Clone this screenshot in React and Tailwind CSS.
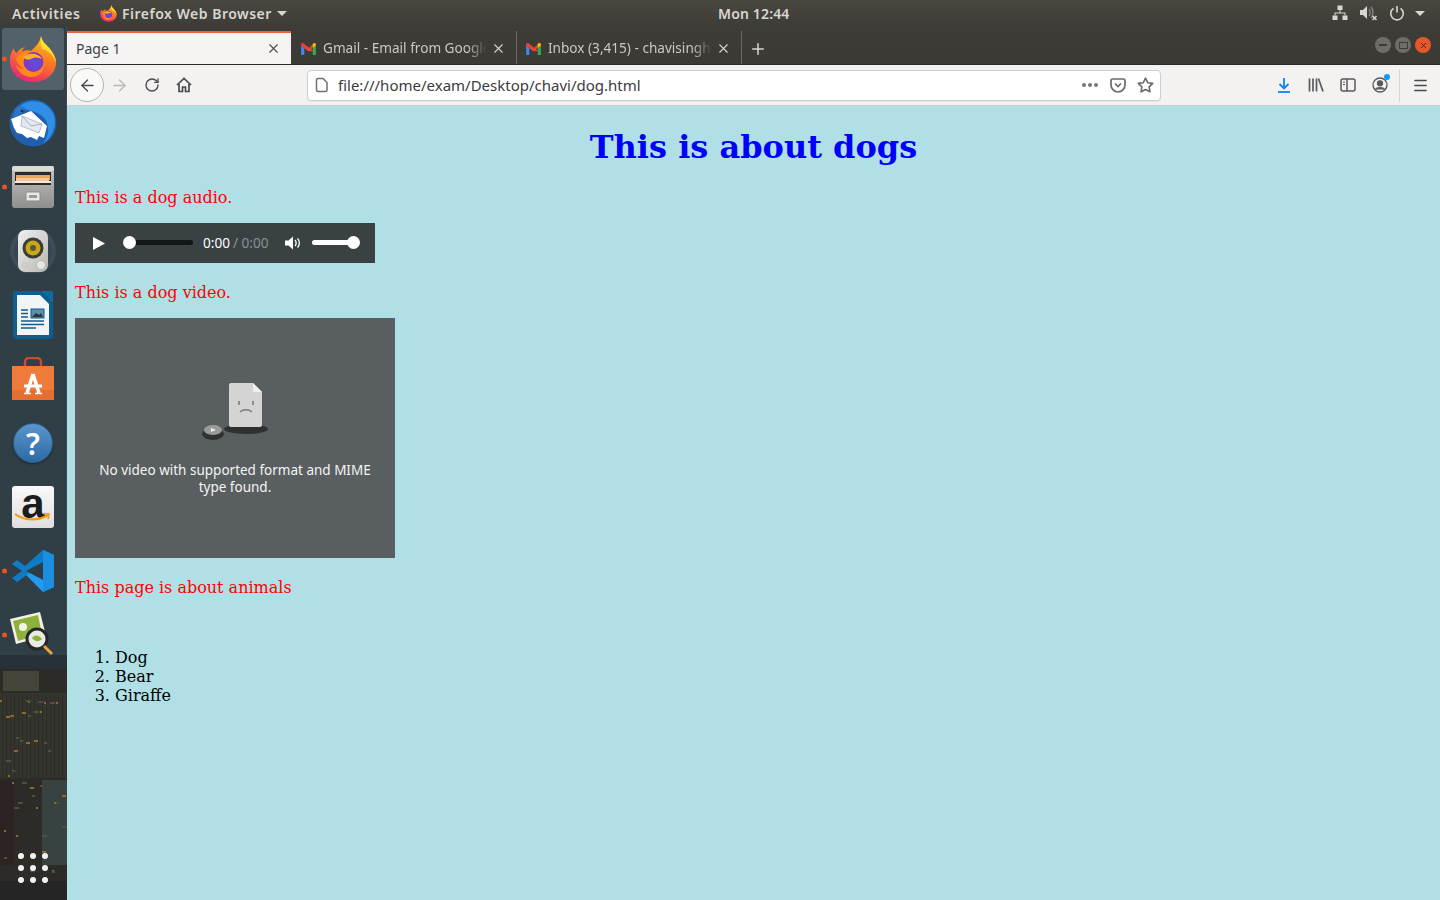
import React from "react";
import { X, Plus, ArrowLeft, ArrowRight, RotateCw, Menu } from "lucide-react";

const uiFont = "font-['Noto_Sans','Open_Sans',sans-serif]";

function FirefoxLogo({ size = 48 }) {
  return (
    <svg width={size} height={size} viewBox="0 0 48 48">
      <defs>
        <linearGradient id="ffBody" x1="0.7" y1="0" x2="0.3" y2="1">
          <stop offset="0" stopColor="#ffc61e" />
          <stop offset="0.45" stopColor="#ff7a1f" />
          <stop offset="1" stopColor="#e9207a" />
        </linearGradient>
        <radialGradient id="ffBall" cx="0.55" cy="0.55" r="0.6">
          <stop offset="0" stopColor="#5b53d8" />
          <stop offset="1" stopColor="#8c2fc4" />
        </radialGradient>
      </defs>
      <path d="M32 1c1 6 5 8 9 13 4 5 6 10 6 13 0 12-10 20-23 20C11 47 1 38 1 26c0-5 1-9 4-13 0 3 1 4 3 5 1-3 4-5 8-6-2 2-3 3-3 5 3-2 6-2 9-1 4-4 9-8 10-15z" fill="url(#ffBody)" />
      <path d="M32 1c1 6 5 8 9 13 3 4 6 9 6 13-3-7-7-11-13-13-2-1-3-6-2-13z" fill="#ffdf2e" />
      <path d="M7 24c3-5 8-8 13-7 7 0 14 4 15 11 1 8-5 14-13 14-7 0-13-5-15-12 3 3 5 4 8 4-4-2-7-6-8-10z" fill="#ff8a16" />
      <circle cx="24.5" cy="27" r="10" fill="url(#ffBall)" />
      <path d="M14 22c3-3 8-4 12-3 4 1 6 3 7 5-4-2-8-2-11 0-3 1-5 1-8-2z" fill="#ffb21e" />
    </svg>
  );
}

function GmailIcon() {
  return (
    <svg width="15" height="12" viewBox="0 0 16 13">
      <path d="M0 2.500V13h3.400V5.500z" fill="#4285f4" />
      <path d="M16 2.500V13h-3.400V5.500z" fill="#34a853" />
      <path d="M0 1.600C0 .3 1.500-.4 2.500.4L8 4.600l4.600 3.400v1L8 9 3.400 5.500v-.3L0 3z" fill="#ea4335" />
      <path d="M12.600 1.300v4.200L8 9 3.400 5.500V2.500L8 6z" fill="#ea4335" />
      <path d="M13.500.4c1-.8 2.500-.1 2.500 1.200v1L12.600 5.500V1.300z" fill="#fbbc04" />
    </svg>
  );
}

function Tab({ title, active, width }) {
  if (active) {
    return (
      <div className={`${width} h-full flex items-center pl-[9px] pr-[10px] bg-[#f5f4f2] border-t-2 border-[#e8653a]`}>
        <span className="flex-1 text-[14px] text-[#3f4048]">{title}</span>
        <X size={15} strokeWidth={1.8} className="text-[#4a4a4f]" />
      </div>
    );
  }
  return (
    <div className={`${width} h-[33px] pt-[2px] flex items-center pl-[9px] pr-[10px] border-r border-[#6b6a64]`}>
      <GmailIcon />
      <span className="ml-[7px] flex-1 overflow-hidden whitespace-nowrap text-[13.6px] text-[#c9c8c3] [mask-image:linear-gradient(to_right,black_88%,transparent)]">
        {title}
      </span>
      <X size={15} strokeWidth={1.8} className="ml-[4px] text-[#d4d3cf]" />
    </div>
  );
}

function TopBar() {
  return (
    <div className={`${uiFont} h-[26px] flex items-center justify-between bg-gradient-to-b from-[#4a4741] to-[#3e3c36] text-[14px] font-semibold text-[#d8d8d2]`}>
      <div className="flex items-center">
        <span className="ml-[12px] w-[88px] tracking-[0.6px]">Activities</span>
        <FirefoxLogo size={17} />
        <span className="ml-[5px] tracking-[0.5px]">Firefox Web Browser</span>
        <span className="ml-[5px] w-0 h-0 border-x-[5px] border-x-transparent border-t-[5px] border-t-[#d8d8d2]" />
      </div>
      <span className="absolute left-[718px] tracking-[0.15px]">Mon 12:44</span>
      <div className="flex items-center pr-[15px]">
        <svg width="16" height="16" viewBox="0 0 16 16" fill="#d8d8d2">
          <rect x="5.500" y="0.500" width="5" height="4.500" />
          <rect x="0.500" y="10.500" width="5" height="4.500" />
          <rect x="10.500" y="10.500" width="5" height="4.500" />
          <path d="M7.500 5h1v2.500H13.500v3h-1V8.500h-9v2h-1v-3h5z" />
        </svg>
        <svg className="ml-[12px]" width="18" height="16" viewBox="0 0 18 16">
          <path d="M0 5h3l4-4v13l-4-4H0z" fill="#d8d8d2" />
          <path d="M9 4c1.500 1 1.500 6 0 7M11 2c2.500 2 2.500 9 0 11" stroke="#8d8c87" strokeWidth="1.300" fill="none" />
          <path d="M12.500 11l4 4m0-4l-4 4" stroke="#d8d8d2" strokeWidth="1.500" />
        </svg>
        <svg className="ml-[11px]" width="16" height="16" viewBox="0 0 16 16" fill="none" stroke="#d8d8d2" strokeWidth="1.600">
          <path d="M4.500 3.300a6.300 6.300 0 1 0 7 0" />
          <path d="M8 1v6.500" />
        </svg>
        <span className="ml-[10px] w-0 h-0 border-x-[5px] border-x-transparent border-t-[5px] border-t-[#d8d8d2]" />
      </div>
    </div>
  );
}

function WindowButton({ kind }) {
  const bg = kind === "close" ? "bg-[#e4572a]" : "bg-[#6e6d68]";
  return (
    <div className={`w-[16px] h-[16px] rounded-full ${bg} flex items-center justify-center`}>
      {kind === "min" && <div className="w-[8px] h-[2px] bg-[#3e3d38]" />}
      {kind === "max" && <div className="w-[9px] h-[7px] border border-[#3e3d38]" />}
      {kind === "close" && <X size={9} strokeWidth={2.2} className="text-[#3e2015]" />}
    </div>
  );
}

function TabStrip() {
  return (
    <div className={`${uiFont} h-[39px] flex items-end bg-gradient-to-b from-[#3e3c36] to-[#3b3a35] border-b border-[#2a2924]`}>
      <div className="h-[33px] flex items-center w-full">
        <Tab title="Page 1" active width="w-[224px]" />
        <Tab title="Gmail - Email from Google" width="w-[225px] ml-[1px]" />
        <Tab title="Inbox (3,415) - chavisingh" width="w-[225px]" />
        <Plus size={18} strokeWidth={2} className="mt-[2px] ml-[7px] text-[#d8d8d2]" />
        <div className="ml-auto mr-[9px] -mt-[5px] flex gap-[4px]">
          <WindowButton kind="min" />
          <WindowButton kind="max" />
          <WindowButton kind="close" />
        </div>
      </div>
    </div>
  );
}

function NavBar() {
  return (
    <div className={`${uiFont} h-[41px] flex items-center bg-[#f3f2f0] border-b border-[#c9cfd1]`}>
      <div className="ml-[3px] w-[34px] h-[34px] rounded-full border border-[#b3b3b1] bg-[#f9f9f8] flex items-center justify-center">
        <ArrowLeft size={19} strokeWidth={1.7} className="text-[#4a4a4f]" />
      </div>
      <ArrowRight size={19} strokeWidth={1.7} className="ml-[6px] text-[#b9b9b9]" />
      <RotateCw size={16} strokeWidth={2} className="ml-[15px] text-[#4a4a4f]" />
      <svg className="ml-[16px]" width="16" height="16" viewBox="0 0 16 16" fill="none" stroke="#4a4a4f" strokeWidth="1.700">
        <path d="M1 8l7-6.500L15 8" />
        <path d="M3 7v7.500h3.500V10h3v4.500H13V7" />
      </svg>
      <div className="ml-[115px] w-[854px] h-[31px] bg-white border border-[#cfcecc] rounded-[4px] flex items-center shadow-[0_1px_1px_rgba(0,0,0,0.05)]">
        <svg className="ml-[7px]" width="14" height="16" viewBox="0 0 14 16" fill="none" stroke="#6f6f72" strokeWidth="1.500">
          <path d="M3 1.500h5l4 4V13a1.500 1.500 0 0 1-1.500 1.500h-7.500A1.500 1.500 0 0 1 1.500 13V3A1.500 1.500 0 0 1 3 1.500z" />
        </svg>
        <span className="ml-[9px] text-[15px] text-[#3b3b40]">file:///home/exam/Desktop/chavi/dog.html</span>
        <div className="ml-auto flex items-center pr-[6px]">
          <div className="flex gap-[2px]">
            <span className="w-[4px] h-[4px] rounded-full bg-[#77777a]" />
            <span className="w-[4px] h-[4px] rounded-full bg-[#77777a]" />
            <span className="w-[4px] h-[4px] rounded-full bg-[#77777a]" />
          </div>
          <svg className="ml-[12px]" width="16" height="15" viewBox="0 0 16 15" fill="none" stroke="#6a6a6d" strokeWidth="1.700">
            <path d="M1 2.500A1.500 1.500 0 0 1 2.500 1h11A1.500 1.500 0 0 1 15 2.500V7a7 7 0 0 1-14 0z" />
            <path d="M5 5.500l3 3 3-3" />
          </svg>
          <svg className="ml-[11px]" width="17" height="16" viewBox="0 0 17 16" fill="none" stroke="#6a6a6d" strokeWidth="1.600" strokeLinejoin="round">
            <path d="M8.500 1.200l2.200 4.500 5 .7-3.600 3.500.9 4.900-4.500-2.300L4 14.800l.9-4.900L1.300 6.400l5-.7z" />
          </svg>
        </div>
      </div>
      <svg className="ml-[116px]" width="14" height="16" viewBox="0 0 14 16" fill="none" stroke="#0a84ff" strokeWidth="1.800">
        <path d="M7 1v10M2.500 7l4.500 4.500L11.500 7" />
        <path d="M1 15h12" />
      </svg>
      <svg className="ml-[17px]" width="16" height="16" viewBox="0 0 16 16" stroke="#5a5a5e" strokeWidth="1.700" fill="none">
        <path d="M1.500 1.500v13M5 1.500v13M8.500 1.500v13M10.500 1.500l4.500 13" />
      </svg>
      <svg className="ml-[16px]" width="16" height="14" viewBox="0 0 16 14" stroke="#5a5a5e" strokeWidth="1.500" fill="none">
        <rect x="1" y="1" width="14" height="12" rx="2" />
        <path d="M7 1v12" />
        <path d="M3 4h2M3 6.500h2" strokeWidth="1" />
      </svg>
      <div className="relative ml-[16px]">
        <svg width="16" height="16" viewBox="0 0 16 16" fill="none" stroke="#5a5a5e" strokeWidth="1.300">
          <circle cx="8" cy="8" r="7" />
          <circle cx="8" cy="6.300" r="2.500" fill="#5a5a5e" />
          <path d="M3.500 12.500c1-2.500 8-2.500 9 0" fill="#5a5a5e" />
        </svg>
        <span className="absolute -top-[3px] -right-[2px] w-[6px] h-[6px] rounded-full bg-[#0a9dff]" />
      </div>
      <div className="ml-[11px] w-px h-[33px] bg-[#d6d5d3]" />
      <Menu size={17} strokeWidth={2} className="ml-[12px] text-[#4a4a4f]" />
    </div>
  );
}

function Thunderbird() {
  return (
    <svg width="48" height="48" viewBox="0 0 48 48">
      <circle cx="24" cy="24" r="23.500" fill="#1f5fae" />
      <path d="M10 8C18-1 37 0 44 14c5 11 0 24-10 31 6-9 7-19 1-26C28 11 18 12 10 8z" fill="#2f8fe6" />
      <path d="M2 20l20-8 16 15-3 12-5-2-2 4-6-3-4 1-5-4-5-1-3-5z" fill="#ffffff" />
      <path d="M13 17l20 8-3 9-18-7z" fill="#e4e8f0" stroke="#9aa6b8" strokeWidth="0.700" />
      <path d="M13 17l9 10 11-2" fill="none" stroke="#9aa6b8" strokeWidth="0.800" />
      <path d="M6 10c3-3 8-3 10-1l-5 7-7 2z" fill="#2f74c6" />
      <circle cx="13" cy="12" r="1.300" fill="#152c55" />
    </svg>
  );
}

function FileCabinet() {
  return (
    <svg width="44" height="44" viewBox="0 0 44 44">
      <defs>
        <linearGradient id="cabinet" x1="0" y1="0" x2="0" y2="1">
          <stop offset="0" stopColor="#c4c4c2" />
          <stop offset="1" stopColor="#8f8f8d" />
        </linearGradient>
      </defs>
      <rect x="1" y="1" width="42" height="42" rx="3" fill="url(#cabinet)" />
      <rect x="1" y="1" width="42" height="5" rx="2" fill="#dcdcda" />
      <rect x="4" y="7" width="36" height="13" fill="#2a2a2a" />
      <rect x="5" y="10" width="34" height="5" fill="#f6a24a" />
      <rect x="5" y="13" width="33" height="3" fill="#f2c79a" />
      <rect x="4" y="16" width="36" height="2" fill="#e9e9e7" />
      <rect x="15" y="27" width="14" height="9" rx="1" fill="#e8e8e6" stroke="#8b8b89" />
      <rect x="18" y="30" width="8" height="3" fill="#9a9a98" />
    </svg>
  );
}

function Speaker() {
  return (
    <svg width="48" height="44" viewBox="0 0 48 44">
      <defs>
        <linearGradient id="speakerBody" x1="0" y1="0" x2="1" y2="1">
          <stop offset="0" stopColor="#f0f0ec" />
          <stop offset="1" stopColor="#b6b6b2" />
        </linearGradient>
      </defs>
      <circle cx="24" cy="22" r="23" fill="#3c4e5c" />
      <circle cx="24" cy="22" r="19" fill="#36464f" />
      <rect x="9" y="1" width="30" height="42" rx="7" fill="url(#speakerBody)" />
      <circle cx="24" cy="19" r="10.500" fill="#3b3b38" />
      <circle cx="24" cy="19" r="7.500" fill="#c9a818" />
      <circle cx="24" cy="19" r="3" fill="#57553e" />
      <circle cx="32" cy="36" r="4.500" fill="#e6e6e2" stroke="#b7b7b2" />
      <circle cx="16" cy="36" r="2.500" fill="none" stroke="#c4c4c0" />
    </svg>
  );
}

function Writer() {
  return (
    <svg width="40" height="48" viewBox="0 0 40 48">
      <path d="M2 0h26l12 12v33a3 3 0 0 1-3 3H3a3 3 0 0 1-3-3V2a2 2 0 0 1 2-2z" fill="#0f5c8f" />
      <path d="M4 4h23l9 9v31H4z" fill="#f2f4f6" />
      <path d="M28 0l12 12V2a2 2 0 0 0-2-2z" fill="#0f6ca3" />
      <rect x="18" y="18" width="13" height="9" fill="#5a8fb0" stroke="#0f5c8f" />
      <path d="M19 26l4-4 3 2 2-2 2 4z" fill="#333" />
      <path d="M8 19h7M8 22.500h7M8 26h7M8 30h23M8 33.500h23M8 37h15" stroke="#0f5c8f" strokeWidth="1.700" />
    </svg>
  );
}

function ShopBag() {
  return (
    <svg width="42" height="44" viewBox="0 0 42 44">
      <path d="M13 10V5a4 4 0 0 1 4-4h8a4 4 0 0 1 4 4v5" fill="none" stroke="#c2502a" strokeWidth="2.400" />
      <path d="M0 9h42v34H0z" fill="#ee7b3a" />
      <path d="M0 33h42v10H0z" fill="#e56e30" />
      <path d="M21 17l-6 19" stroke="#fff" strokeWidth="3.500" />
      <path d="M21 17l6 19" stroke="#fff" strokeWidth="3.500" />
      <path d="M12 27.500h18v3H12z" fill="#fff" />
      <path d="M12 36.500h7M23 36.500h7" stroke="#fff" strokeWidth="1.500" />
    </svg>
  );
}

function HelpIcon() {
  return (
    <div className="w-[40px] h-[40px] rounded-full bg-gradient-to-b from-[#5b95cb] to-[#2d6aa6] border border-[#2b5f92] flex items-center justify-center text-white text-[30px] font-semibold font-['Noto_Sans',sans-serif] shadow-[0_1px_2px_rgba(0,0,0,0.4)]">
      ?
    </div>
  );
}

function AmazonIcon() {
  return (
    <div className="w-[42px] h-[42px] rounded-[3px] bg-gradient-to-b from-[#f9f9f9] to-[#dfdfdf] flex flex-col items-center relative">
      <span className="text-[42px] leading-[36px] font-bold text-[#1c1c1c] font-['Liberation_Sans',sans-serif]">a</span>
      <svg className="absolute bottom-[5px] left-[2px]" width="38" height="11" viewBox="0 0 38 11" fill="none" stroke="#f49a1a" strokeWidth="2.200">
        <path d="M1 2c9 7 24 7 33 1" />
        <path d="M29 1.500l6 .5-1 5" strokeWidth="1.600" />
      </svg>
    </div>
  );
}

function VsCode() {
  return (
    <svg width="42" height="42" viewBox="0 0 42 42">
      <path d="M31 0l11 5v32l-11 5-17-17z" fill="#1f9cf0" />
      <path d="M31 0v12L12 27l-7 5-5-4 10-7L0 14l5-4 8 6z" fill="#0f7bc4" />
      <path d="M31 12v18L14 21z" fill="#2d3c45" />
      <path d="M31 42l11-5V5l-11-5z" fill="#1a8fe0" />
    </svg>
  );
}

function ImageViewer() {
  return (
    <svg width="46" height="46" viewBox="0 0 46 46">
      <path d="M0 7L30 0l6 24-30 8z" fill="#f1f1e6" />
      <path d="M3 9l25-6 4 19-24 7z" fill="#8fb13c" />
      <circle cx="13" cy="15" r="4" fill="#f5f5ea" />
      <circle cx="27" cy="27" r="10" fill="#e8ebe0" stroke="#24282a" strokeWidth="3" />
      <path d="M22 26c3-4 7-3 10 1-3 3-7 3-10-1z" fill="#8fb13c" />
      <path d="M34 34l8 8" stroke="#e9a53a" strokeWidth="3" />
    </svg>
  );
}

// small windows of the wallpaper city at the bottom of the dock
const cityLights = Array.from({ length: 46 }, (_, i) => ({
  x: (i * i * 7 + i * 13) % 64,
  y: 45 + ((i * i * 11 + i * 29) % 185),
  w: 2 + (i % 4),
  warm: i % 2 === 0,
}));

const cityStripes = Array.from({ length: 16 }, (_, i) => 2 + i * 4);

function DockWallpaper() {
  return (
    <svg className="absolute left-0 bottom-0 blur-[0.6px]" width="67" height="245" viewBox="0 0 67 245">
      <rect width="67" height="245" fill="#2c2b28" />
      <rect x="0" y="0" width="67" height="14" fill="#263238" />
      <rect x="3" y="16" width="36" height="20" fill="#45453a" />
      <rect x="0" y="38" width="67" height="85" fill="#35352f" />
      {cityStripes.map((x) => (
        <rect key={x} x={x} y="40" width="1" height="85" fill="#2c2c26" />
      ))}
      <rect x="42" y="125" width="25" height="85" fill="#384240" />
      <rect x="0" y="125" width="14" height="85" fill="#2c2423" />
      <rect x="0" y="226" width="67" height="19" fill="#242524" />
      {cityLights.map((l, i) => (
        <rect key={i} x={l.x} y={l.y} width={l.w} height="2" fill={l.warm ? "#8c6a2a" : "#4d4e44"} />
      ))}
    </svg>
  );
}

const dockIcons = [
  { el: <FirefoxLogo size={48} />, active: true, dot: true },
  { el: <Thunderbird /> },
  { el: <FileCabinet />, dot: true },
  { el: <Speaker /> },
  { el: <Writer /> },
  { el: <ShopBag /> },
  { el: <HelpIcon /> },
  { el: <AmazonIcon /> },
  { el: <VsCode />, dot: true },
  { el: <ImageViewer />, dot: true },
];

function Dock() {
  return (
    <div className="relative w-[67px] shrink-0 bg-[#303e46] border-r border-[#3b4a50]">
      <DockWallpaper />
      <div className="relative flex flex-col">
        {dockIcons.map((item, i) => (
          <div key={i} className={`relative flex items-center justify-center ${i === 0 ? "h-[65px]" : "h-[64px]"}`}>
            {item.active && <div className="absolute left-[2px] top-[2px] w-[62px] h-[62px] rounded-[3px] bg-[#53626a]" />}
            {item.dot && <span className="absolute left-[2px] top-1/2 -translate-y-1/2 w-[5px] h-[5px] rounded-full bg-[#e9541f]" />}
            <div className="relative">{item.el}</div>
          </div>
        ))}
      </div>
      <div className="absolute left-[18px] bottom-[17px] grid grid-cols-3 gap-x-[6px] gap-y-[6px]">
        {[...Array(9)].map((_, i) => (
          <span key={i} className="w-[6px] h-[6px] rounded-full bg-[#f2f2f2]" />
        ))}
      </div>
    </div>
  );
}

function AudioPlayer() {
  return (
    <div className="w-[300px] h-[40px] bg-[#3a4143] flex items-center text-[13.6px] font-['Noto_Sans',sans-serif]">
      <svg className="ml-[18px]" width="12" height="13" viewBox="0 0 12 13" fill="#fff">
        <path d="M0 0l12 6.500L0 13z" />
      </svg>
      <div className="relative ml-[18px] -mt-[2px] w-[70px] h-[5px] rounded-full bg-[#111617]">
        <span className="absolute left-0 -top-[4px] w-[13px] h-[13px] rounded-full bg-white" />
      </div>
      <span className="ml-[10px] -mt-[1px] text-white">0:00</span>
      <span className="ml-[3px] -mt-[1px] text-[#8b9092]">/ 0:00</span>
      <svg className="ml-[16px]" width="17" height="14" viewBox="0 0 17 14">
        <path d="M0 4.500h3.500L8 .5v13L3.500 9.500H0z" fill="#fff" />
        <path d="M10 4c1.500 1.500 1.500 4.500 0 6M12.500 2.500c2.500 2.500 2.500 6.500 0 9" stroke="#fff" strokeWidth="1.300" fill="none" />
      </svg>
      <div className="relative ml-[10px] -mt-[2px] w-[47px] h-[5px] rounded-full bg-white">
        <span className="absolute -right-[1px] -top-[4px] w-[13px] h-[13px] rounded-full bg-white" />
      </div>
    </div>
  );
}

function VideoError() {
  return (
    <div className="w-[320px] h-[240px] bg-[#595f60] flex flex-col items-center font-['Noto_Sans',sans-serif]">
      <svg className="mt-[65px]" width="70" height="58" viewBox="0 0 70 58">
        <ellipse cx="46" cy="46" rx="22" ry="5" fill="#2f3131" />
        <path d="M29 2a2 2 0 0 1 2-2h22l9 9v33a2 2 0 0 1-2 2H31a2 2 0 0 1-2-2z" fill="#d4d4d4" />
        <path d="M53 0l9 9h-9z" fill="#efefef" />
        <rect x="38" y="18" width="2" height="4" fill="#8b8b8b" />
        <rect x="52" y="18" width="2" height="4" fill="#8b8b8b" />
        <path d="M40 29c3-3 9-3 12 0" fill="none" stroke="#7d7d7d" strokeWidth="1.400" />
        <ellipse cx="13" cy="51" rx="11" ry="6" fill="#303232" />
        <ellipse cx="13" cy="47" rx="9" ry="5" fill="#9a9a9a" />
        <path d="M11 45l5 2-5 2z" fill="#eee" />
      </svg>
      <p className="mt-[21px] w-[290px] text-center text-[13.5px] leading-[17px] text-[#f4f4f4]">
        No video with supported format and MIME type found.
      </p>
    </div>
  );
}

export default function App() {
  return (
    <div className="w-[1440px] h-[900px] overflow-hidden flex flex-col relative">
      <TopBar />
      <div className="flex flex-1 min-h-0">
        <Dock />
        <div className="flex-1 flex flex-col min-w-0">
          <TabStrip />
          <NavBar />
          <main className="flex-1 bg-[#b0e0e6] px-[8px] font-['DejaVu_Serif',serif] text-[16px] leading-[19px] text-black">
            <h1 className="mt-[22px] text-center text-[32px] leading-[38px] font-bold text-[#0000ff]">This is about dogs</h1>
            <p className="mt-[22px] text-[#ff0000]">This is a dog audio.</p>
            <div className="mt-[16px]">
              <AudioPlayer />
            </div>
            <p className="mt-[20px] text-[#ff0000]">This is a dog video.</p>
            <div className="mt-[16px]">
              <VideoError />
            </div>
            <p className="mt-[20px] text-[#ff0000]">This page is about animals</p>
            <ol className="mt-[51px] pl-[40px] list-decimal">
              <li>Dog</li>
              <li>Bear</li>
              <li>Giraffe</li>
            </ol>
          </main>
        </div>
      </div>
    </div>
  );
}
